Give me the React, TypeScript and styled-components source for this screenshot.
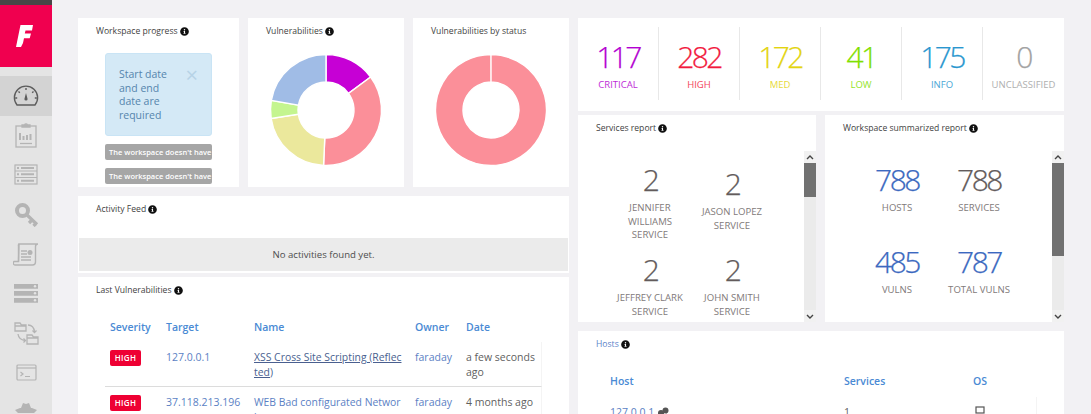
import React from "react";
import styled, { createGlobalStyle } from "styled-components";
import { FaInfoCircle } from "react-icons/fa";

const GlobalStyle = createGlobalStyle`
    html, body {
        margin: 0;
        padding: 0;
        height: 100%;
        overflow: hidden;
        background: #f2f1f4;
        font-family: "Open Sans", "Liberation Sans", sans-serif;
    }
    * {
        box-sizing: border-box;
    }
`;

const Page = styled.div`
    display: flex;
    width: 1091px;
    height: 414px;
    overflow: hidden;
`;

const Sidebar = styled.nav`
    flex: 0 0 52px;
    background: #e4e4e4;
    border-top: 5px solid #474747;
`;

const Logo = styled.div`
    height: 62px;
    background: #f0004f;
    display: flex;
    align-items: center;
    justify-content: center;
    padding-right: 4px;
    margin-bottom: 9px;
`;

const NavItem = styled.div<{ $active?: boolean }>`
    height: 39.6px;
    display: flex;
    align-items: center;
    justify-content: center;
    background: ${(p) => (p.$active ? "#d3d3d3" : "transparent")};
    color: ${(p) => (p.$active ? "#5c5c5c" : "#b4b4b4")};
`;

const Main = styled.main`
    flex: 1;
    display: grid;
    grid-template-columns: 491px 486px;
    column-gap: 9px;
    padding: 18px 0 0 26px;
    align-items: start;
`;

const Column = styled.div`
    display: flex;
    flex-direction: column;
`;

const TopRow = styled.div`
    display: grid;
    grid-template-columns: 161px 156px 156px;
    column-gap: 9px;
    margin-bottom: 9px;
`;

const Card = styled.section<{ $height: number; $gap?: number }>`
    background: #fff;
    height: ${(p) => p.$height}px;
    margin-bottom: ${(p) => p.$gap ?? 0}px;
    overflow: hidden;
`;

const Title = styled.h3<{ $link?: boolean }>`
    margin: 0;
    padding: 2px 0 0 18px;
    height: 25px;
    font-size: 8.6px;
    line-height: 13px;
    font-weight: 400;
    color: ${(p) => (p.$link ? "#5b83c9" : "#3f3f3f")};
    display: flex;
    align-items: center;
    gap: 2px;
    white-space: nowrap;

    svg {
        color: #111;
        font-size: 9px;
    }
`;

const ProgressBody = styled.div`
    padding: 10px 27px 0;
    display: flex;
    flex-direction: column;
    gap: 8px;
`;

const Alert = styled.div`
    height: 83px;
    background: #d4e9f6;
    border: 1px solid #c9e4f5;
    border-radius: 3px;
    padding: 14px 13px 0;
    display: flex;
    justify-content: space-between;
    color: #5585ad;
    font-size: 10.5px;
    line-height: 13.6px;
`;

const AlertText = styled.span`
    width: 56px;
`;

const AlertClose = styled.span`
    font-size: 22px;
    line-height: 13px;
    color: #b7d3e6;
`;

const NoDataBar = styled.div`
    height: 16px;
    background: #a6a6a6;
    border-radius: 2px;
    color: #fff;
    font-size: 7.5px;
    font-weight: 600;
    line-height: 16px;
    padding-left: 4px;
    white-space: nowrap;
    overflow: hidden;
`;

const ChartWrap = styled.div`
    display: flex;
    justify-content: center;
    padding-top: 7px;
`;

const EmptyFeed = styled.div`
    margin: 17px 1px 0;
    height: 33px;
    background: #ebebeb;
    color: #4d4d4d;
    font-size: 9.6px;
    line-height: 33px;
    text-align: center;
`;

const VulnTable = styled.div`
    margin: 18px 27px 0;
    width: 437px;
`;

const VulnRow = styled.div<{ $head?: boolean }>`
    display: grid;
    grid-template-columns: 56px 88px 161px 51px 81px;
    padding-left: 5px;
    font-size: 10.5px;
    line-height: 14.5px;
    ${(p) =>
        p.$head
            ? `
        height: 22px;
        font-weight: 600;
        color: #4a8ad4;
    `
            : `
        padding-top: 8px;
        padding-bottom: 7px;
        color: #5b7fc4;
        border-bottom: 1px solid #dcdcdc;
        border-right: 1px solid #f4f4f4;
    `}
`;

const Badge = styled.span`
    display: inline-block;
    width: 31px;
    height: 16px;
    border-radius: 2px;
    background: #ee0033;
    color: #fff;
    font-size: 8px;
    font-weight: 600;
    line-height: 16px;
    text-align: center;
    letter-spacing: 0.3px;
`;

const NameCell = styled.span<{ $underline?: boolean }>`
    width: 148px;
    font-size: 10.4px;
    word-break: break-all;
    text-decoration: ${(p) => (p.$underline ? "underline" : "none")};
    color: ${(p) => (p.$underline ? "#4a5f8f" : "inherit")};
`;

const DateCell = styled.span`
    color: #5f5f5f;
`;

const StatsRow = styled.div`
    display: grid;
    grid-template-columns: repeat(6, 81px);
    padding-top: 9px;
`;

const StatCell = styled.div<{ $color: string; $last?: boolean }>`
    height: 73px;
    color: ${(p) => p.$color};
    border-right: ${(p) => (p.$last ? "none" : "1px solid #e8e8e8")};
    display: flex;
    flex-direction: column;
    align-items: center;
    padding-top: 15px;
`;

const StatNumber = styled.span`
    font-size: 30px;
    font-weight: 300;
    line-height: 30px;
    letter-spacing: -2.6px;
    -webkit-text-stroke: 0.25px currentColor;
`;

const StatLabel = styled.span`
    font-size: 9.5px;
    line-height: 13px;
    margin-top: 6px;
    opacity: 0.85;
`;

const SplitRow = styled.div`
    display: grid;
    grid-template-columns: 238px 239px;
    column-gap: 9px;
    margin-bottom: 9px;
`;

const ScrollArea = styled.div`
    display: flex;
    justify-content: flex-end;
    margin-top: 11px;
    height: 171px;
`;

const ReportGrid = styled.div<{ $rowGap: number }>`
    flex: 1;
    display: grid;
    grid-template-columns: 82px 82px;
    justify-content: start;
    row-gap: ${(p) => p.$rowGap}px;
    padding: 14px 0 0 31px;
    align-content: start;
    overflow: hidden;
`;

const ReportCell = styled.div<{ $offset?: number }>`
    display: flex;
    flex-direction: column;
    align-items: center;
    text-align: center;
    padding-top: ${(p) => p.$offset ?? 0}px;
`;

const ReportNumber = styled.span<{ $blue?: boolean }>`
    font-size: 30px;
    font-weight: 300;
    line-height: 30px;
    letter-spacing: -2.5px;
    -webkit-text-stroke: 0.25px currentColor;
    color: ${(p) => (p.$blue ? "#3b69c0" : "#635b5b")};
`;

const ReportLabel = styled.span`
    margin-top: 6px;
    font-size: 9.6px;
    line-height: 13.7px;
    color: #7f7a7a;
`;

const ScrollBar = styled.div`
    flex: 0 0 12px;
    background: #ebebeb;
    display: flex;
    flex-direction: column;
    margin-right: 0.5px;
`;

const ScrollArrow = styled.div`
    height: 12px;
    flex: 0 0 12px;
    display: flex;
    align-items: center;
    justify-content: center;
    background: #f1f1f1;
    color: #444;
`;

const ScrollThumb = styled.div<{ $height: number }>`
    height: ${(p) => p.$height}px;
    background: #717171;
`;

const ScrollSpacer = styled.div`
    flex: 1;
`;

const HostTable = styled.div`
    margin: 18px 27px 0 27px;
`;

const HostRow = styled.div<{ $head?: boolean }>`
    display: grid;
    grid-template-columns: 234px 129px 1fr;
    padding-left: 5px;
    font-size: 10.5px;
    line-height: 14.5px;
    ${(p) =>
        p.$head
            ? `
        height: 23px;
        font-weight: 600;
        color: #4a8ad4;
    `
            : `
        padding-top: 8px;
        color: #5b7fc4;
        border-right: 1px solid #f4f4f4;
    `}
`;

const HostName = styled.span`
    display: flex;
    align-items: center;
    gap: 3px;
`;

const PlainCell = styled.span`
    color: #5f5f5f;
`;

const OsCell = styled.span`
    padding-left: 2px;
`;

const STATS = [
    { value: 117, label: "CRITICAL", color: "#b300d1" },
    { value: 282, label: "HIGH", color: "#f2193d" },
    { value: 172, label: "MED", color: "#e3d40f" },
    { value: 41, label: "LOW", color: "#7fe000" },
    { value: 175, label: "INFO", color: "#2a97cf" },
    { value: 0, label: "UNCLASSIFIED", color: "#a2a2a2" },
];

const DONUT = [
    { value: 117, color: "#c600d5" },
    { value: 282, color: "#fb8f99" },
    { value: 172, color: "#ebe89c" },
    { value: 41, color: "#c4f58f" },
    { value: 175, color: "#a0bce6" },
];

const SERVICES = [
    ["JENNIFER", "WILLIAMS", "SERVICE"],
    ["JASON LOPEZ", "SERVICE"],
    ["JEFFREY CLARK", "SERVICE"],
    ["JOHN SMITH", "SERVICE"],
];

const SUMMARY = [
    { value: 788, label: "HOSTS", blue: true },
    { value: 788, label: "SERVICES", blue: false },
    { value: 485, label: "VULNS", blue: true },
    { value: 787, label: "TOTAL VULNS", blue: true },
];

function polar(r: number, angle: number) {
    const rad = ((angle - 90) * Math.PI) / 180;
    return [60 + r * Math.cos(rad), 60 + r * Math.sin(rad)];
}

function slicePath(start: number, end: number) {
    const [ax, ay] = polar(55.5, start);
    const [bx, by] = polar(55.5, end);
    const [cx, cy] = polar(28, end);
    const [dx, dy] = polar(28, start);
    const large = end - start > 180 ? 1 : 0;
    return `M${ax} ${ay}A55.5 55.5 0 ${large} 1 ${bx} ${by}L${cx} ${cy}A28 28 0 ${large} 0 ${dx} ${dy}Z`;
}

function Donut({ slices }: { slices: { value: number; color: string }[] }) {
    const total = slices.reduce((sum, s) => sum + s.value, 0);
    let angle = 0;
    return (
        <svg width={120} height={120} viewBox="0 0 120 120">
            {slices.map((s, i) => {
                // a full ring has to stop just short or the arc collapses
                const sweep = Math.min((s.value / total) * 360, 359.9);
                const path = slicePath(angle, angle + sweep);
                angle += sweep;
                return (
                    <path
                        key={i}
                        d={path}
                        fill={s.color}
                        stroke="#fff"
                        strokeWidth={1.4}
                    />
                );
            })}
        </svg>
    );
}

const Gauge = () => (
    <svg width="26" height="22" viewBox="0 0 26 22" fill="none" stroke="currentColor" strokeWidth="1.4">
        <path d="M4 20h18a11.6 11.6 0 1 0-18 0z" />
        <path d="M13 3v2M5.5 6.5l1.3 1.3M20.5 6.5l-1.3 1.3M2.2 13h2M21.8 13h2" />
        <path d="M13 8l1.6 6a1.6 1.6 0 1 1-3.2 0z" fill="currentColor" stroke="none" />
    </svg>
);

const Clipboard = () => (
    <svg width="22" height="26" viewBox="0 0 22 26" fill="none" stroke="currentColor" strokeWidth="1.3">
        <rect x="1" y="4" width="20" height="21" />
        <path d="M7 5V3h2.5a1.6 1.6 0 0 1 3 0H15v2z" fill="currentColor" />
        <path d="M5 18v-7M8.5 18v-4M12 18v-5M15.500 18v-6" strokeWidth="2" />
        <path d="M5 21.500h12" />
    </svg>
);

const ListPanel = () => (
    <svg width="24" height="21" viewBox="0 0 24 21" fill="none" stroke="currentColor" strokeWidth="1.2">
        <rect x="1" y="1" width="22" height="19" />
        <path d="M1 7h22M1 13.500h22" />
        <path d="M7 4h13M7 10.200h13M7 16.800h13" strokeWidth="2" />
        <path d="M3 4h2M3 10.200h2M3 16.800h2" strokeWidth="2" />
    </svg>
);

const Key = () => (
    <svg width="25" height="25" viewBox="0 0 25 25" fill="none" stroke="currentColor">
        <circle cx="8.500" cy="8.500" r="5.500" strokeWidth="4" />
        <path d="M12.500 12.500L23 22.500M18 18l-3 3M22 21.500l-2.500 2.500" strokeWidth="3.200" />
    </svg>
);

const Scroll = () => (
    <svg width="26" height="23" viewBox="0 0 26 23" fill="none" stroke="currentColor" strokeWidth="1.4">
        <path d="M6 1h19c-1.500 0-2.500 1-2.500 2.500V19a3 3 0 0 1-3 3H2a2 2 0 0 1-1-3.500h4.500z" />
        <path d="M6 1a2 2 0 0 0-.5 2v15.500" />
        <path d="M8 8h6M8 11h6M8 14h10M8 17h10" />
        <circle cx="17" cy="9.500" r="2.500" fill="currentColor" stroke="none" />
    </svg>
);

const Servers = () => (
    <svg width="24" height="19" viewBox="0 0 24 19" fill="currentColor">
        <path d="M0 0h24v4.700H0zM0 7h24v4.700H0zM0 14h24v4.700H0z" />
        <circle cx="21" cy="2.300" r="1.200" fill="#e4e4e4" />
        <circle cx="21" cy="9.300" r="1.200" fill="#e4e4e4" />
        <circle cx="21" cy="16.300" r="1.200" fill="#e4e4e4" />
    </svg>
);

const FolderSwap = () => (
    <svg width="25" height="23" viewBox="0 0 25 23" fill="none" stroke="currentColor" strokeWidth="1.3">
        <path d="M1 1h5l1.500 2H12v6H1zM1 4h11" />
        <path d="M13 13h5l1.500 2H24v7H13zM13 16h11" />
        <path d="M14 3c4 0 6 2 6.500 7M4 12c.5 4 3 6 7 6.500" />
        <path d="M18.500 8.500l2 2 2-2M9.500 16.500l2 2-2 2" />
    </svg>
);

const Terminal = () => (
    <svg width="21" height="17" viewBox="0 0 21 17" fill="none" stroke="currentColor" strokeWidth="1.2">
        <rect x="1" y="1" width="19" height="15" rx="1" />
        <path d="M1 4h19" />
        <path d="M4.500 8l2.500 2-2.500 2M9 12.500h5" />
    </svg>
);

const Spy = () => (
    <svg width="24" height="24" viewBox="0 0 24 24" fill="currentColor">
        <path d="M7 7l2-5 3 1 3-1 2 5zM1 9l5-2h12l5 2-3 3H4zM6 14h12v4l3 5H3l3-5z" />
    </svg>
);

const LogoMark = () => (
    <svg width="17" height="22" viewBox="0 0 17 22">
        <path
            fill="#fff"
            d="M4.500 0H17l-1 5.500H9.500l-.7 3H15l-1.300 4.800H8l-1 4.700-2 4H0z"
        />
    </svg>
);

const Chevron = ({ up }: { up?: boolean }) => (
    <svg width="8" height="5" viewBox="0 0 8 5" fill="none" stroke="currentColor" strokeWidth="1.4">
        <path d={up ? "M1 4l3-3 3 3" : "M1 1l3 3 3-3"} />
    </svg>
);

const Tools = () => (
    <svg width="13" height="11" viewBox="0 0 13 11" fill="#555">
        <circle cx="4" cy="6" r="3" />
        <circle cx="8.500" cy="3.500" r="3" />
        <path d="M9 6l4 5h-3z" />
    </svg>
);

const Monitor = () => (
    <svg width="10" height="10" viewBox="0 0 10 10" fill="none" stroke="#555" strokeWidth="1.200">
        <rect x="1" y="1" width="8" height="6" />
        <path d="M3 9h4" />
    </svg>
);

function Scrollbar({ thumb }: { thumb: number }) {
    return (
        <ScrollBar>
            <ScrollArrow>
                <Chevron up />
            </ScrollArrow>
            <ScrollThumb $height={thumb} />
            <ScrollSpacer />
            <ScrollArrow>
                <Chevron />
            </ScrollArrow>
        </ScrollBar>
    );
}

export default function App() {
    return (
        <Page>
            <GlobalStyle />
            <Sidebar>
                <Logo>
                    <LogoMark />
                </Logo>
                <NavItem $active>
                    <Gauge />
                </NavItem>
                <NavItem>
                    <Clipboard />
                </NavItem>
                <NavItem>
                    <ListPanel />
                </NavItem>
                <NavItem>
                    <Key />
                </NavItem>
                <NavItem>
                    <Scroll />
                </NavItem>
                <NavItem>
                    <Servers />
                </NavItem>
                <NavItem>
                    <FolderSwap />
                </NavItem>
                <NavItem>
                    <Terminal />
                </NavItem>
                <NavItem>
                    <Spy />
                </NavItem>
            </Sidebar>
            <Main>
                <Column>
                    <TopRow>
                        <Card $height={169}>
                            <Title>
                                Workspace progress <FaInfoCircle />
                            </Title>
                            <ProgressBody>
                                <Alert>
                                    <AlertText>
                                        Start date and end date are required
                                    </AlertText>
                                    <AlertClose>×</AlertClose>
                                </Alert>
                                <NoDataBar>
                                    The workspace doesn't have any vulnerabilities
                                </NoDataBar>
                                <NoDataBar>
                                    The workspace doesn't have any vulnerabilities
                                </NoDataBar>
                            </ProgressBody>
                        </Card>
                        <Card $height={169}>
                            <Title>
                                Vulnerabilities <FaInfoCircle />
                            </Title>
                            <ChartWrap>
                                <Donut slices={DONUT} />
                            </ChartWrap>
                        </Card>
                        <Card $height={169}>
                            <Title>Vulnerabilities by status</Title>
                            <ChartWrap>
                                <Donut slices={[{ value: 1, color: "#fb8f99" }]} />
                            </ChartWrap>
                        </Card>
                    </TopRow>
                    <Card $height={77} $gap={4}>
                        <Title>
                            Activity Feed <FaInfoCircle />
                        </Title>
                        <EmptyFeed>No activities found yet.</EmptyFeed>
                    </Card>
                    <Card $height={140}>
                        <Title>
                            Last Vulnerabilities <FaInfoCircle />
                        </Title>
                        <VulnTable>
                            <VulnRow $head>
                                <span>Severity</span>
                                <span>Target</span>
                                <span>Name</span>
                                <span>Owner</span>
                                <span>Date</span>
                            </VulnRow>
                            <VulnRow>
                                <span>
                                    <Badge>HIGH</Badge>
                                </span>
                                <span>127.0.0.1</span>
                                <NameCell $underline>
                                    XSS Cross Site Scripting (Reflected)
                                </NameCell>
                                <span>faraday</span>
                                <DateCell>a few seconds ago</DateCell>
                            </VulnRow>
                            <VulnRow>
                                <span>
                                    <Badge>HIGH</Badge>
                                </span>
                                <span>37.118.213.196</span>
                                <NameCell>WEB Bad configurated Network</NameCell>
                                <span>faraday</span>
                                <DateCell>4 months ago</DateCell>
                            </VulnRow>
                        </VulnTable>
                    </Card>
                </Column>
                <Column>
                    <Card $height={93} $gap={4}>
                        <StatsRow>
                            {STATS.map((s, i) => (
                                <StatCell
                                    key={s.label}
                                    $color={s.color}
                                    $last={i === STATS.length - 1}
                                >
                                    <StatNumber>{s.value}</StatNumber>
                                    <StatLabel>{s.label}</StatLabel>
                                </StatCell>
                            ))}
                        </StatsRow>
                    </Card>
                    <SplitRow>
                        <Card $height={207}>
                            <Title>
                                Services report <FaInfoCircle />
                            </Title>
                            <ScrollArea>
                                <ReportGrid $rowGap={13}>
                                    {SERVICES.map((lines, i) => (
                                        <ReportCell key={lines[0]} $offset={i === 1 ? 4 : 0}>
                                            <ReportNumber>2</ReportNumber>
                                            <ReportLabel>
                                                {lines.map((line) => (
                                                    <div key={line}>{line}</div>
                                                ))}
                                            </ReportLabel>
                                        </ReportCell>
                                    ))}
                                </ReportGrid>
                                <Scrollbar thumb={34} />
                            </ScrollArea>
                        </Card>
                        <Card $height={207}>
                            <Title>
                                Workspace summarized report <FaInfoCircle />
                            </Title>
                            <ScrollArea>
                                <ReportGrid $rowGap={32}>
                                    {SUMMARY.map((s) => (
                                        <ReportCell key={s.label}>
                                            <ReportNumber $blue={s.blue}>{s.value}</ReportNumber>
                                            <ReportLabel>{s.label}</ReportLabel>
                                        </ReportCell>
                                    ))}
                                </ReportGrid>
                                <Scrollbar thumb={93} />
                            </ScrollArea>
                        </Card>
                    </SplitRow>
                    <Card $height={90}>
                        <Title $link>
                            Hosts <FaInfoCircle />
                        </Title>
                        <HostTable>
                            <HostRow $head>
                                <span>Host</span>
                                <span>Services</span>
                                <span>OS</span>
                            </HostRow>
                            <HostRow>
                                <HostName>
                                    127.0.0.1 <Tools />
                                </HostName>
                                <PlainCell>1</PlainCell>
                                <OsCell>
                                    <Monitor />
                                </OsCell>
                            </HostRow>
                        </HostTable>
                    </Card>
                </Column>
            </Main>
        </Page>
    );
}
